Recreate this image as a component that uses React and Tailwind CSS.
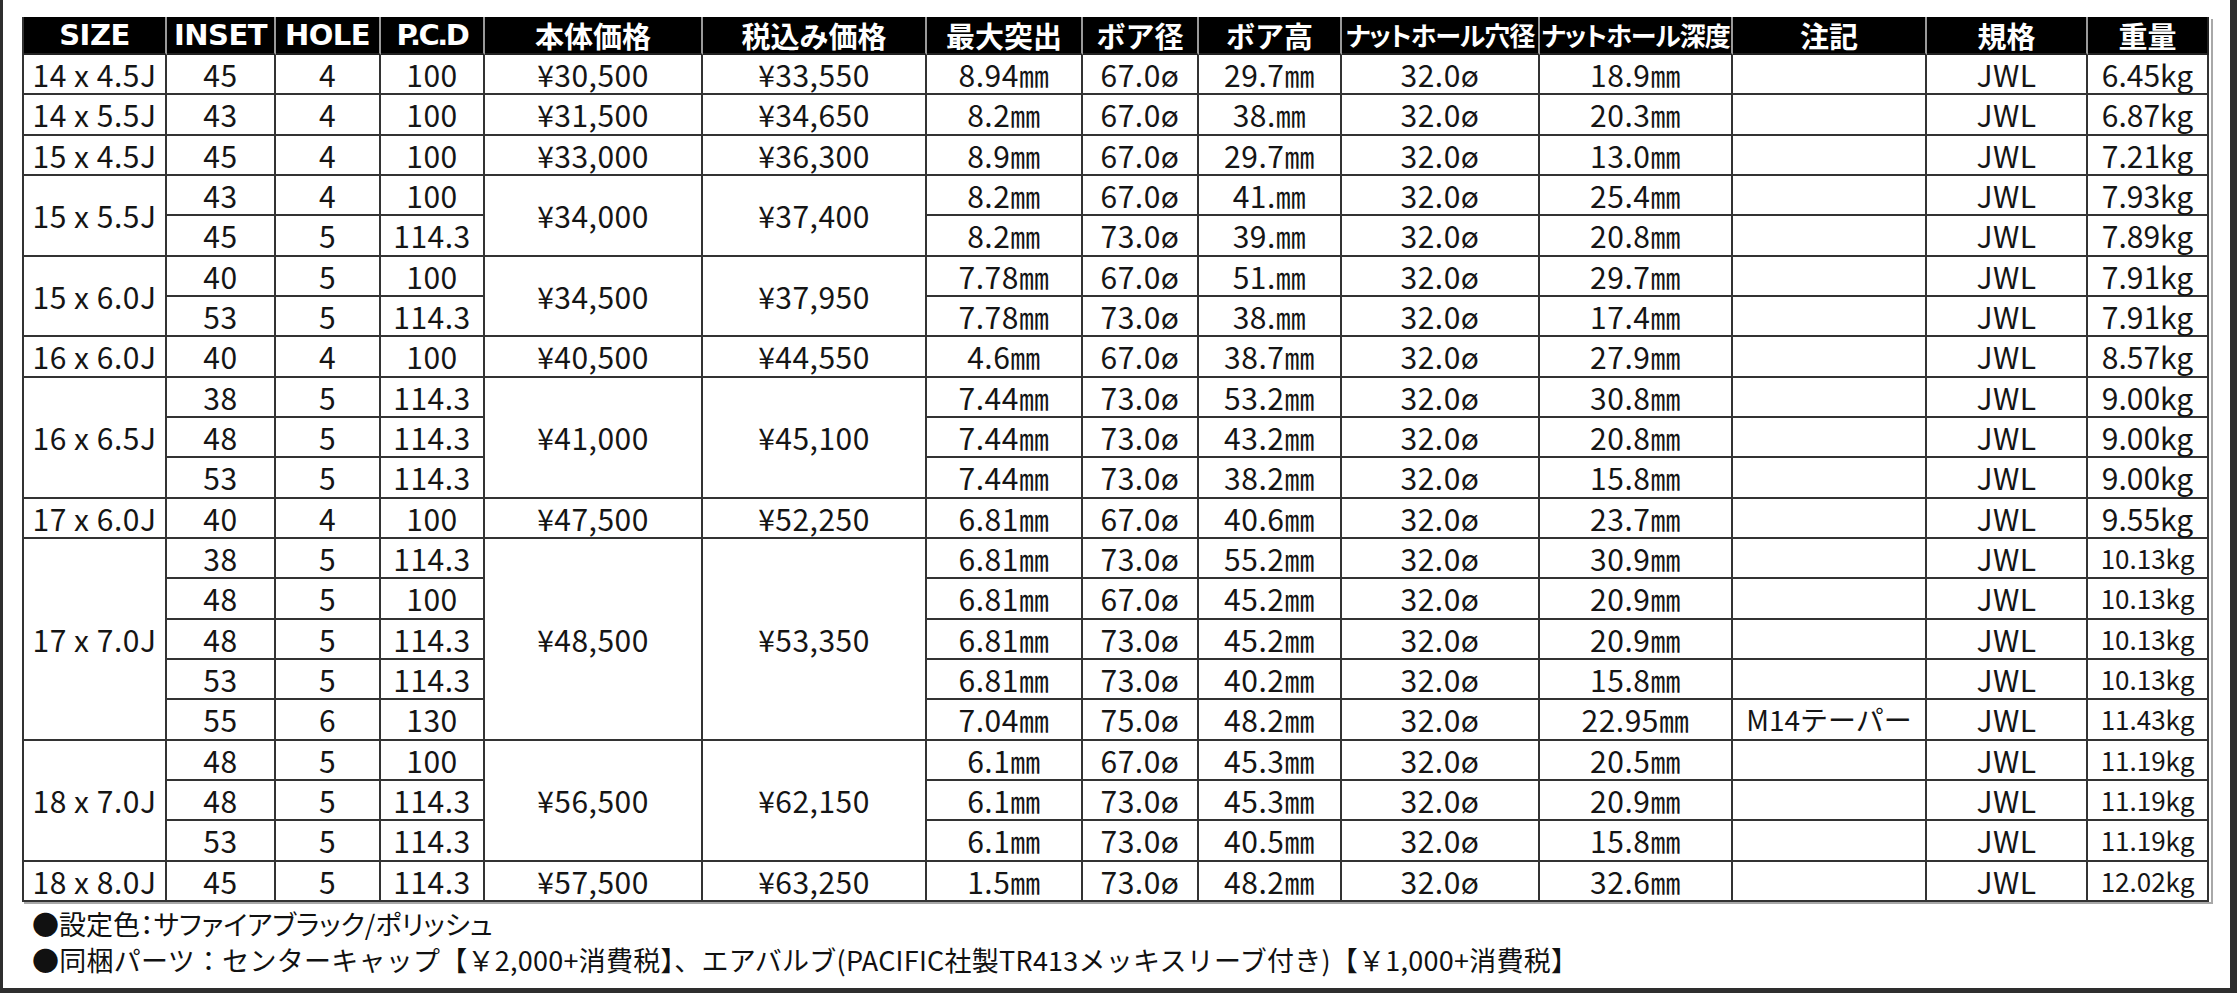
import React from "react";

const H = "㎜";

const rows = [
  { size: ["14 x 4.5J", 1], inset: "45", hole: "4", pcd: "100", p1: ["¥30,500", 1], p2: ["¥33,550", 1], off: "8.94", bore: "67.0ø", bh: "29.7", nut: "32.0ø", nd: "18.9", note: "", kg: "6.45kg" },
  { size: ["14 x 5.5J", 1], inset: "43", hole: "4", pcd: "100", p1: ["¥31,500", 1], p2: ["¥34,650", 1], off: "8.2", bore: "67.0ø", bh: "38.", nut: "32.0ø", nd: "20.3", note: "", kg: "6.87kg" },
  { size: ["15 x 4.5J", 1], inset: "45", hole: "4", pcd: "100", p1: ["¥33,000", 1], p2: ["¥36,300", 1], off: "8.9", bore: "67.0ø", bh: "29.7", nut: "32.0ø", nd: "13.0", note: "", kg: "7.21kg" },
  { size: ["15 x 5.5J", 2], inset: "43", hole: "4", pcd: "100", p1: ["¥34,000", 2], p2: ["¥37,400", 2], off: "8.2", bore: "67.0ø", bh: "41.", nut: "32.0ø", nd: "25.4", note: "", kg: "7.93kg" },
  { inset: "45", hole: "5", pcd: "114.3", off: "8.2", bore: "73.0ø", bh: "39.", nut: "32.0ø", nd: "20.8", note: "", kg: "7.89kg" },
  { size: ["15 x 6.0J", 2], inset: "40", hole: "5", pcd: "100", p1: ["¥34,500", 2], p2: ["¥37,950", 2], off: "7.78", bore: "67.0ø", bh: "51.", nut: "32.0ø", nd: "29.7", note: "", kg: "7.91kg" },
  { inset: "53", hole: "5", pcd: "114.3", off: "7.78", bore: "73.0ø", bh: "38.", nut: "32.0ø", nd: "17.4", note: "", kg: "7.91kg" },
  { size: ["16 x 6.0J", 1], inset: "40", hole: "4", pcd: "100", p1: ["¥40,500", 1], p2: ["¥44,550", 1], off: "4.6", bore: "67.0ø", bh: "38.7", nut: "32.0ø", nd: "27.9", note: "", kg: "8.57kg" },
  { size: ["16 x 6.5J", 3], inset: "38", hole: "5", pcd: "114.3", p1: ["¥41,000", 3], p2: ["¥45,100", 3], off: "7.44", bore: "73.0ø", bh: "53.2", nut: "32.0ø", nd: "30.8", note: "", kg: "9.00kg" },
  { inset: "48", hole: "5", pcd: "114.3", off: "7.44", bore: "73.0ø", bh: "43.2", nut: "32.0ø", nd: "20.8", note: "", kg: "9.00kg" },
  { inset: "53", hole: "5", pcd: "114.3", off: "7.44", bore: "73.0ø", bh: "38.2", nut: "32.0ø", nd: "15.8", note: "", kg: "9.00kg" },
  { size: ["17 x 6.0J", 1], inset: "40", hole: "4", pcd: "100", p1: ["¥47,500", 1], p2: ["¥52,250", 1], off: "6.81", bore: "67.0ø", bh: "40.6", nut: "32.0ø", nd: "23.7", note: "", kg: "9.55kg" },
  { size: ["17 x 7.0J", 5], inset: "38", hole: "5", pcd: "114.3", p1: ["¥48,500", 5], p2: ["¥53,350", 5], off: "6.81", bore: "73.0ø", bh: "55.2", nut: "32.0ø", nd: "30.9", note: "", kg: "10.13kg" },
  { inset: "48", hole: "5", pcd: "100", off: "6.81", bore: "67.0ø", bh: "45.2", nut: "32.0ø", nd: "20.9", note: "", kg: "10.13kg" },
  { inset: "48", hole: "5", pcd: "114.3", off: "6.81", bore: "73.0ø", bh: "45.2", nut: "32.0ø", nd: "20.9", note: "", kg: "10.13kg" },
  { inset: "53", hole: "5", pcd: "114.3", off: "6.81", bore: "73.0ø", bh: "40.2", nut: "32.0ø", nd: "15.8", note: "", kg: "10.13kg" },
  { inset: "55", hole: "6", pcd: "130", off: "7.04", bore: "75.0ø", bh: "48.2", nut: "32.0ø", nd: "22.95", note: "M14テーパー", kg: "11.43kg" },
  { size: ["18 x 7.0J", 3], inset: "48", hole: "5", pcd: "100", p1: ["¥56,500", 3], p2: ["¥62,150", 3], off: "6.1", bore: "67.0ø", bh: "45.3", nut: "32.0ø", nd: "20.5", note: "", kg: "11.19kg" },
  { inset: "48", hole: "5", pcd: "114.3", off: "6.1", bore: "73.0ø", bh: "45.3", nut: "32.0ø", nd: "20.9", note: "", kg: "11.19kg" },
  { inset: "53", hole: "5", pcd: "114.3", off: "6.1", bore: "73.0ø", bh: "40.5", nut: "32.0ø", nd: "15.8", note: "", kg: "11.19kg" },
  { size: ["18 x 8.0J", 1], inset: "45", hole: "5", pcd: "114.3", p1: ["¥57,500", 1], p2: ["¥63,250", 1], off: "1.5", bore: "73.0ø", bh: "48.2", nut: "32.0ø", nd: "32.6", note: "", kg: "12.02kg" },
];

const spanCls = { 1: "", 2: "row-span-2", 3: "row-span-3", 5: "row-span-5" };

const cellBase =
  "flex items-center justify-center border-r-2 border-b-2 border-[#333] text-[30px] tracking-[0.5px] leading-none text-[#151515] whitespace-nowrap";

function Cell({ children, span = 1, cls = "" }) {
  return <div className={`${cellBase} ${spanCls[span]} ${cls}`}>{children}</div>;
}

const headers = [
  { t: "SIZE", k: "latin" },
  { t: "INSET", k: "latin" },
  { t: "HOLE", k: "latin" },
  { t: "P.C.D", k: "pcd" },
  { t: "本体価格" },
  { t: "税込み価格" },
  { t: "最大突出" },
  { t: "ボア径" },
  { t: "ボア高" },
  { t: "ナットホール穴径", k: "narrow" },
  { t: "ナットホール深度", k: "narrow" },
  { t: "注記" },
  { t: "規格" },
  { t: "重量" },
];

const headerFont = {
  latin: "font-['DejaVu_Sans',sans-serif] text-[29px] tracking-[-0.5px]",
  pcd: "font-['DejaVu_Sans',sans-serif] text-[29px] tracking-[-2.5px]",
  narrow: "font-['Noto_Sans_CJK_JP',sans-serif] text-[26px] [font-feature-settings:'palt'] tracking-[-1px]",
  jp: "font-['Noto_Sans_CJK_JP',sans-serif] text-[29px]",
};

export default function App() {
  const cells = [];
  headers.forEach((h, i) => {
    const last = i === headers.length - 1;
    cells.push(
      <div
        key={"h" + i}
        className={`flex items-center justify-center bg-black text-white font-bold whitespace-nowrap leading-none border-b-2 border-[#222] ${
          last ? "border-r-2 border-r-[#222]" : "border-r-2 border-r-[#9a9a9a]"
        } ${headerFont[h.k || "jp"]}`}
      >
        {h.t}
      </div>
    );
  });
  rows.forEach((r, i) => {
    if (r.size) cells.push(<Cell key={i + "s"} span={r.size[1]}>{r.size[0]}</Cell>);
    cells.push(<Cell key={i + "i"}>{r.inset}</Cell>);
    cells.push(<Cell key={i + "h"}>{r.hole}</Cell>);
    cells.push(<Cell key={i + "p"}>{r.pcd}</Cell>);
    if (r.p1) cells.push(<Cell key={i + "p1"} span={r.p1[1]}>{r.p1[0]}</Cell>);
    if (r.p2) cells.push(<Cell key={i + "p2"} span={r.p2[1]}>{r.p2[0]}</Cell>);
    cells.push(<Cell key={i + "o"}>{r.off}{H}</Cell>);
    cells.push(<Cell key={i + "b"}>{r.bore}</Cell>);
    cells.push(<Cell key={i + "bh"}>{r.bh}{H}</Cell>);
    cells.push(<Cell key={i + "n"}>{r.nut}</Cell>);
    cells.push(<Cell key={i + "nd"}>{r.nd}{H}</Cell>);
    cells.push(<Cell key={i + "no"} cls="!text-[28px] !tracking-normal">{r.note}</Cell>);
    cells.push(<Cell key={i + "j"}>JWL</Cell>);
    cells.push(
      <Cell key={i + "k"} cls={r.kg.length > 6 ? "!text-[26px] !tracking-normal" : "!tracking-normal"}>
        {r.kg}
      </Cell>
    );
  });

  return (
    <div className="w-[2237px] h-[993px] flex flex-col bg-[#2e2e2e] overflow-hidden font-['Noto_Sans_CJK_JP',sans-serif]">
      <div className="flex h-[988px]">
        <div className="w-[3px] bg-[#2e2e2e]" />
        <div className="flex-1 bg-white pl-[19px] pt-[17px]">
          <div className="w-[2189px] grid grid-cols-[143px_109px_105px_104px_218px_224px_156px_116px_143px_198px_193px_194px_161px_121px] grid-rows-[38px_repeat(21,40.33px)] border-l-2 border-[#333] shadow-[2px_2px_0_0_#a8a8a8]">
            {cells}
          </div>
          <div className="pl-[10px] mt-[4px] text-[27px] leading-[36px] text-[#111] whitespace-nowrap">
            <div className="[font-feature-settings:'palt']">●設定色：サファイアブラック/ポリッシュ</div>
            <div className="tracking-[0.25px]">
              ●同梱パーツ：センターキャップ【￥2,000+消費税】、エアバルブ(PACIFIC社製TR413メッキスリーブ付き)【￥1,000+消費税】
            </div>
          </div>
        </div>
        <div className="w-[7px] bg-[#2e2e2e]" />
      </div>
      <div className="h-[5px] bg-[#2e2e2e]" />
    </div>
  );
}
